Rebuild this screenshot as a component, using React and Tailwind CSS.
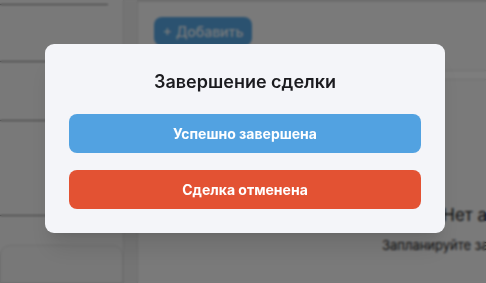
import React from "react";

const LEFT_ROWS = [
  "h-[5px]",
  "h-[61px]",
  "h-[62px]",
  "h-[101px]",
];

function Backdrop() {
  return (
    <div className="flex h-[283px] w-[486px] overflow-hidden bg-[#f3f3f3]">
      {/* left column */}
      <div className="flex w-[124px] shrink-0 flex-col border-r border-[#d8d8d8]">
        {LEFT_ROWS.map((h, i) => (
          <div key={i} className={`${h} w-[108px] border-b border-[#7d7d7d] last:w-full`} />
        ))}
        <div className="mt-[29px] h-[40px] w-full rounded-t-[10px] border border-[#dcdcdc] bg-[#f1f1f1]" />
      </div>
      <div className="w-[13px] shrink-0 bg-[#e9e9e9]" />
      {/* right column */}
      <div className="flex w-[776px] shrink-0 flex-col border-t-2 border-l border-[#d9d9d9] bg-[#f5f5f5]">
        <div className="flex h-[68px] items-start pl-[16px] pt-[15px]">
          <button className="h-[29px] w-[98px] rounded-[8px] bg-[#56a4e0] text-[14px] font-medium text-[#eef4f9]">
            + Добавить
          </button>
        </div>
        <div className="h-[10px] border-y border-[#e0e0e0] bg-[#fafafa]" />
        <div className="flex flex-col items-center pt-[124px]">
          <div className="text-[17px] leading-[22px] text-[#1c1c1c]">Нет активных задач</div>
          <div className="mt-[10px] text-[13px] leading-[18px] text-[#222222]">
            Запланируйте задачу, чтобы не забыть о ней
          </div>
        </div>
      </div>
    </div>
  );
}

export default function App() {
  return (
    <div className="relative h-[283px] w-[486px] overflow-hidden font-['Inter',sans-serif]">
      <Backdrop />
      <div className="absolute inset-0 flex items-start justify-start bg-black/50 pl-[45px] pt-[44px] backdrop-blur-[1px]">
        <div className="flex w-[400px] flex-col rounded-[9px] bg-[#f4f5f9] px-[24px] pt-[24px] pb-[24px] shadow-xl">
          <h2 className="text-center text-[18px] leading-[28px] font-semibold text-[#1b1b1f]">
            Завершение сделки
          </h2>
          <div className="mt-[18px] flex flex-col gap-[17px]">
            <button className="h-[39px] rounded-[8px] bg-[#52a2e1] text-[14px] font-bold text-white">
              Успешно завершена
            </button>
            <button className="h-[39px] rounded-[8px] bg-[#e35233] text-[14px] font-bold text-white">
              Сделка отменена
            </button>
          </div>
        </div>
      </div>
    </div>
  );
}
